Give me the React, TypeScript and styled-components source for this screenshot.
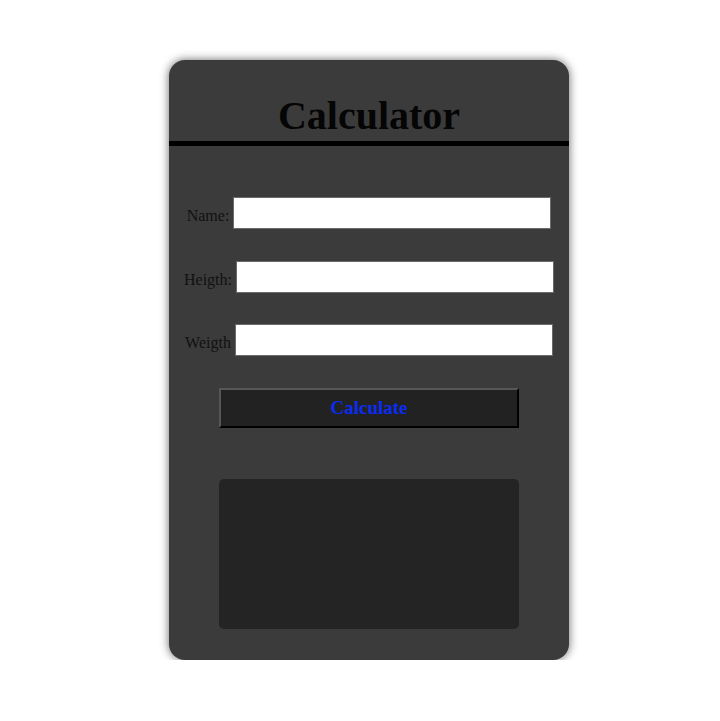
import React from 'react';
import styled, { createGlobalStyle } from 'styled-components';

const GlobalStyle = createGlobalStyle`
  body {
    margin: 0;
    background: #ffffff;
    font-family: "Liberation Serif", "Times New Roman", serif;
  }
`;

const Page = styled.div`
  display: flex;
  justify-content: center;
  padding-top: 60px;
  padding-left: 18px;
`;

const Card = styled.div`
  width: 400px;
  height: 600px;
  box-sizing: border-box;
  background: #3b3b3b;
  border-radius: 16px;
  box-shadow: 0 0 10px rgba(0, 0, 0, 0.6);
  display: flex;
  flex-direction: column;
  overflow: hidden;
`;

const Title = styled.h1`
  margin: 0;
  padding: 34px 0 3px;
  font-size: 40px;
  line-height: 44px;
  font-weight: bold;
  text-align: center;
  color: #050505;
  border-bottom: 5px solid #000;
`;

const Form = styled.div`
  display: flex;
  flex-direction: column;
  align-items: center;
  padding-top: 51px;
`;

const Row = styled.div<{ $gap?: number }>`
  display: flex;
  align-items: center;
  gap: 4px;
  margin-bottom: ${(p) => p.$gap ?? 32}px;
`;

const Label = styled.label`
  font-size: 16px;
  color: #111;
  padding-top: 5px;
`;

const Input = styled.input`
  width: 318px;
  height: 32px;
  box-sizing: border-box;
  border: 1px solid #6a6a6a;
  background: #fff;
  margin: 0;
  padding: 0 4px;
`;

const Button = styled.button`
  width: 300px;
  height: 40px;
  box-sizing: border-box;
  background: #222;
  border: 2px solid;
  border-color: #565656 #000 #000 #565656;
  color: #0a2cf5;
  font-family: "Liberation Serif", "Times New Roman", serif;
  font-weight: bold;
  font-size: 19px;
  cursor: pointer;
`;

const Result = styled.div`
  width: 300px;
  height: 150px;
  margin-top: 51px;
  background: #242424;
  border-radius: 5px;
`;

export default function App() {
  return (
    <>
      <GlobalStyle />
      <Page>
        <Card>
          <Title>Calculator</Title>
          <Form>
            <Row>
              <Label>Name:</Label>
              <Input type="text" />
            </Row>
            <Row $gap={31}>
              <Label>Heigth:</Label>
              <Input type="text" />
            </Row>
            <Row>
              <Label>Weigth</Label>
              <Input type="text" />
            </Row>
            <Button>Calculate</Button>
            <Result />
          </Form>
        </Card>
      </Page>
    </>
  );
}
